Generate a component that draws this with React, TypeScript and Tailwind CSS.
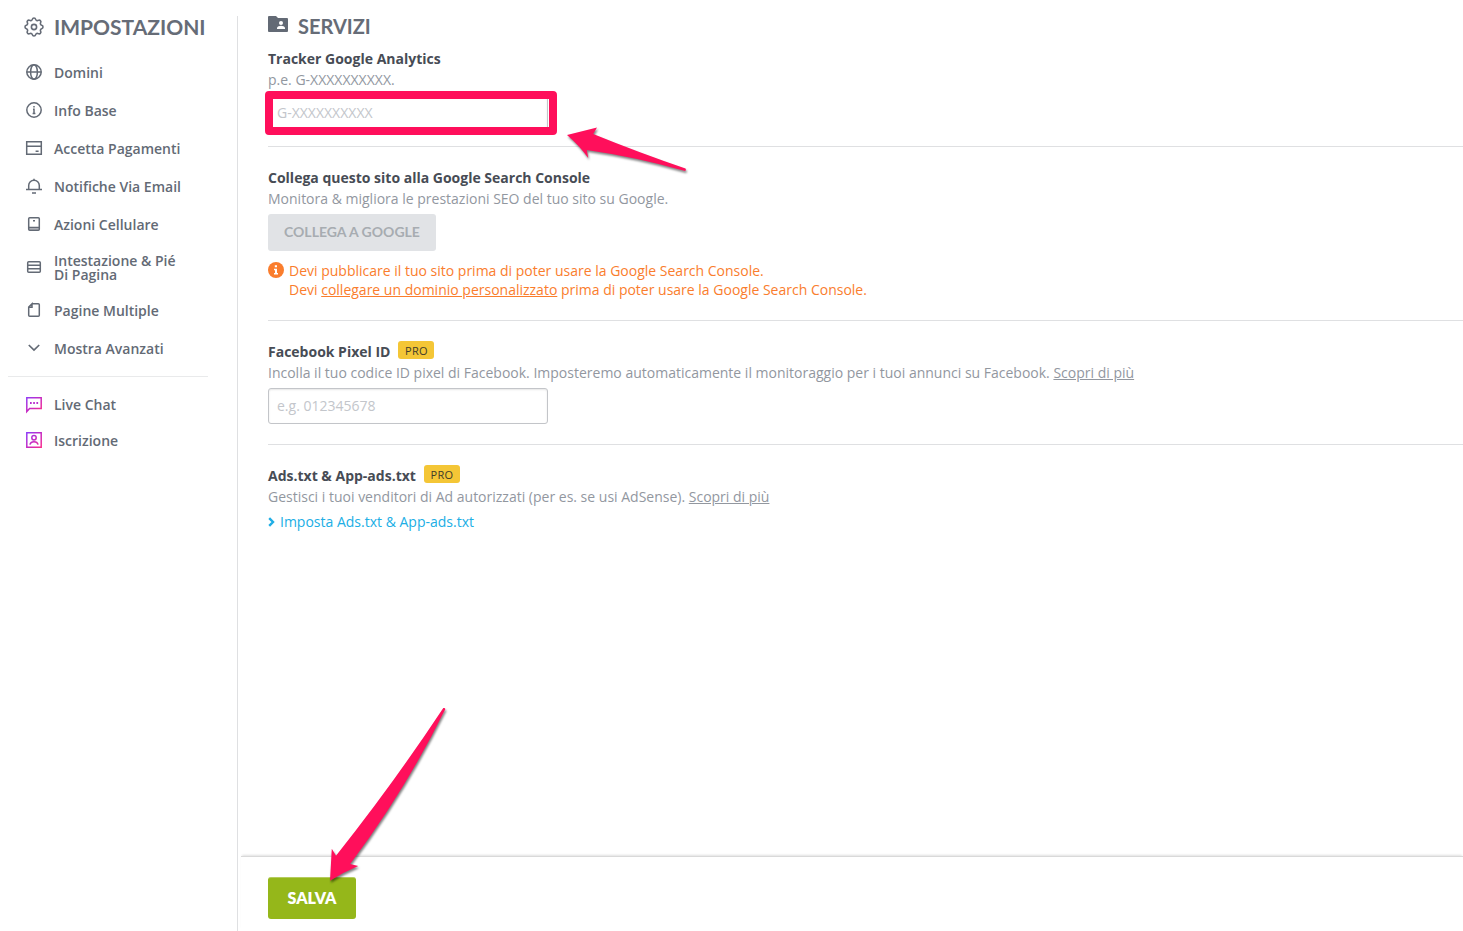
import React from 'react'

const FONT = "font-['Open_Sans','Noto_Sans',sans-serif]"
const HEADING = "font-['Lato','Open_Sans',sans-serif]"

interface IconProps {
  children: React.ReactNode
  stroke?: string
}

const Icon = ({ children, stroke = 'currentColor' }: IconProps) => (
  <svg viewBox="0 0 16 16" className="w-4 h-4 shrink-0 overflow-visible" fill="none" stroke={stroke} strokeWidth="1.5" aria-hidden="true">
    {children}
  </svg>
)

const GearIcon = () => (
  <svg viewBox="0 0 24 24" className="w-6 h-6 -mx-1 shrink-0" fill="none" stroke="currentColor" strokeWidth="1.6" strokeLinejoin="round" aria-hidden="true">
    <path d="M10.325 4.317c.426-1.756 2.924-1.756 3.35 0a1.724 1.724 0 002.573 1.066c1.543-.94 3.31.826 2.37 2.37a1.724 1.724 0 001.065 2.572c1.756.426 1.756 2.924 0 3.35a1.724 1.724 0 00-1.066 2.573c.94 1.543-.826 3.31-2.37 2.37a1.724 1.724 0 00-2.572 1.065c-.426 1.756-2.924 1.756-3.35 0a1.724 1.724 0 00-2.573-1.066c-1.543.94-3.31-.826-2.37-2.37a1.724 1.724 0 00-1.065-2.572c-1.756-.426-1.756-2.924 0-3.35a1.724 1.724 0 001.066-2.573c-.94-1.543.826-3.31 2.37-2.37.996.608 2.296.07 2.572-1.065z" />
    <circle cx="12" cy="12" r="2.6" />
  </svg>
)

const menu = [
  {
    label: 'Domini',
    icon: (
      <Icon>
        <circle cx="8" cy="8" r="7.2" />
        <ellipse cx="8" cy="8" rx="3.4" ry="7.2" />
        <path d="M.7 8h14.6" />
      </Icon>
    ),
  },
  {
    label: 'Info Base',
    icon: (
      <Icon>
        <circle cx="8" cy="8" r="7.2" />
        <path d="M8 4v1.6M7 7.2h1v4M6.6 11.4h2.8" />
      </Icon>
    ),
  },
  {
    label: 'Accetta Pagamenti',
    icon: (
      <Icon>
        <path d="M.7 1.7h14.6v12.6H.7zM.7 6.3h14.6M9.6 11.2h3" />
      </Icon>
    ),
  },
  {
    label: 'Notifiche Via Email',
    icon: (
      <Icon>
        <path d="M0 11.400h16M2.700 11.200V7.500a5.300 5.300 0 0 1 10.600 0v3.700M8 .8v1.600M6 14.900h4" />
      </Icon>
    ),
  },
  {
    label: 'Azioni Cellulare',
    icon: (
      <Icon>
        <rect x="2.7" y="1.7" width="10.6" height="12.6" rx="1" />
        <path d="M2.700 11.600h10.600M7 4.700h2" />
        <path d="M3 13h10" strokeOpacity=".5" />
      </Icon>
    ),
  },
  {
    label: 'Intestazione & Pié Di Pagina',
    icon: (
      <Icon>
        <rect x="1.7" y="2.7" width="12.6" height="10.6" rx="1" />
        <path d="M1.7 6.3h12.6M1.7 9.7h12.6" />
      </Icon>
    ),
  },
  {
    label: 'Pagine Multiple',
    icon: (
      <Icon>
        <path d="M6 1.700h6.300a1 1 0 0 1 1 1v10.600a1 1 0 0 1-1 1H3.700a1 1 0 0 1-1-1V5L6 1.700v3.600H2.700" />
      </Icon>
    ),
  },
  {
    label: 'Mostra Avanzati',
    icon: (
      <Icon>
        <path d="M2.800 5L8 10l5.200-5" strokeWidth="1.7" />
      </Icon>
    ),
  },
]

const help = [
  {
    label: 'Live Chat',
    icon: (
      <Icon stroke="url(#accent)">
        <path d="M.8 15.500V1.800h14.400v10.600H3.600z" />
        <path d="M4 7h1.700M7.200 7h1.700M10.400 7h1.700" strokeWidth="1.9" stroke="#b92fd0" />
      </Icon>
    ),
  },
  {
    label: 'Iscrizione',
    icon: (
      <Icon stroke="url(#accent)">
        <path d="M.8.8h14.4v14.4H.8z" />
        <circle cx="8" cy="5.8" r="2.2" />
        <path d="M3.900 12.600c.6-2.200 2.100-2.900 4.100-2.900s3.500.7 4.100 2.900" />
      </Icon>
    ),
  },
]

const ProBadge = () => (
  <span className="ml-2 inline-flex h-[18px] w-9 items-center justify-center rounded-[3px] bg-[#f4c636] text-[11px] font-medium tracking-wide text-[#3f3b2a]">PRO</span>
)

const Title = ({ children }: { children: React.ReactNode }) => (
  <h2 className="flex h-[21px] items-start whitespace-nowrap font-bold leading-[21px] text-[#474c55]">{children}</h2>
)

const inputClass =
  'block h-9 w-[280px] rounded-[3px] border border-[#c3c5c9] bg-white px-2 pb-[2px] text-sm text-[#5f6672] shadow-[inset_0_1px_2px_rgba(0,0,0,0.1)] outline-none placeholder:text-[#c3c6cb]'

const Sidebar = () => (
  <aside className="mt-4 w-[238px] shrink-0 border-r border-[#dfe0e2] pl-2 text-[#636a75]">
    <h1 className={`flex h-[22px] items-center gap-3 pl-[18px] text-[21px] font-bold text-[#666c77] ${HEADING}`}>
      <GearIcon />
      IMPOSTAZIONI
    </h1>
    <nav className="mt-[15px] w-[200px] font-semibold leading-[14px]">
      {menu.map(item => (
        <a key={item.label} href="#" className="flex min-h-[38px] items-center gap-3 py-[9px] pl-[18px] pr-6">
          {item.icon}
          <span className="pt-[2px]">{item.label}</span>
        </a>
      ))}
      <hr className="my-[9px] border-[#e9eaeb]" />
      {help.map(item => (
        <a key={item.label} href="#" className="flex h-9 items-center gap-3 pl-[18px]">
          {item.icon}
          <span className="pt-[2px]">{item.label}</span>
        </a>
      ))}
    </nav>
  </aside>
)

const App = () => (
  <div className={`flex min-h-screen bg-white text-sm text-[#92979f] ${FONT}`}>
    <svg className="absolute h-0 w-0" aria-hidden="true">
      <defs>
        <linearGradient id="accent" gradientUnits="userSpaceOnUse" x1="0" y1="0" x2="16" y2="16">
          <stop offset="0" stopColor="#8a3ffc" />
          <stop offset="0.5" stopColor="#c42bc4" />
          <stop offset="1" stopColor="#ff2e88" />
        </linearGradient>
      </defs>
    </svg>

    <Sidebar />

    <main className="flex min-w-0 flex-1 flex-col pt-4">
      <div className="flex-1 pl-[30px]">
        <h1 className={`flex h-5 items-center gap-[10px] text-xl font-bold text-[#666c77] ${HEADING}`}>
          <svg viewBox="0 0 20 16" className="mb-1 h-4 w-5" aria-hidden="true">
            <path fill="#636a75" d="M1 0h7l2 2h9a1 1 0 0 1 1 1v12a1 1 0 0 1-1 1H1a1 1 0 0 1-1-1V1a1 1 0 0 1 1-1z" />
            <circle cx="13" cy="7" r="2" fill="#fff" />
            <path fill="#fff" d="M9 13v-1c0-1.400 2.600-2.200 4-2.200s4 .8 4 2.200v1z" />
          </svg>
          SERVIZI
        </h1>

        <section className="mt-3 border-b border-[#dfe0e2] pb-[15px]">
          <Title>
            <label htmlFor="ga">Tracker Google Analytics</label>
          </Title>
          <p className="leading-[21px]">p.e. G-XXXXXXXXXX.</p>
          <div className="relative mt-[5px] w-[280px]">
            <input id="ga" type="text" placeholder="G-XXXXXXXXXX" className={inputClass} />
            <div className="pointer-events-none absolute -left-[3px] -right-[9px] -top-1 -bottom-1 rounded-[4px] border-8 border-[#ff0f5b]" />
            <svg viewBox="0 0 124 50" className="pointer-events-none absolute left-[298px] top-[31px] h-[50px] w-[124px] overflow-visible drop-shadow-[1px_2px_1px_rgba(0,0,0,0.5)]" aria-hidden="true">
              <path fill="#ff0f5b" d="M1 9L31 1.600 27.200 8Q74 27 119.500 42.500q1 2-.5 2.500Q70 31 20.800 24l1.400 8Q13 19 1 9z" />
            </svg>
          </div>
        </section>

        <section className="border-b border-[#dfe0e2] py-5">
          <Title>Collega questo sito alla Google Search Console</Title>
          <p className="leading-[21px]">Monitora &amp; migliora le prestazioni SEO del tuo sito su Google.</p>
          <button type="button" disabled className={`mt-[5px] block h-[37px] rounded-[3px] bg-[#e1e3e6] px-4 pb-[2px] text-sm font-bold text-[#a7acb1] ${HEADING}`}>
            COLLEGA A GOOGLE
          </button>
          <div className="mt-[10px] flex gap-[5px] pb-px leading-[19px] text-[#fa7d2d]">
            <svg viewBox="0 0 16 16" className="mt-px h-4 w-4 shrink-0" aria-hidden="true">
              <circle cx="8" cy="8" r="8" fill="currentColor" />
              <path fill="#fff" d="M6.800 3.200h2.200v2.100H6.800zM6 6.700h3v4.200h1v1.500H6v-1.500h1V8.200H6z" />
            </svg>
            <p>
              Devi pubblicare il tuo sito prima di poter usare la Google Search Console.
              <br />
              Devi <a href="#" className="underline">collegare un dominio personalizzato</a> prima di poter usare la Google Search Console.
            </p>
          </div>
        </section>

        <section className="border-b border-[#dfe0e2] py-5">
          <Title>
            <label htmlFor="pixel">Facebook Pixel ID</label>
            <ProBadge />
          </Title>
          <p className="leading-[21px]">
            Incolla il tuo codice ID pixel di Facebook. Imposteremo automaticamente il monitoraggio per i tuoi annunci su Facebook.{' '}
            <a href="#" className="underline">Scopri di più</a>
          </p>
          <input id="pixel" type="text" placeholder="e.g. 012345678" className={`mt-[5px] ${inputClass}`} />
        </section>

        <section className="py-5">
          <Title>
            Ads.txt &amp; App-ads.txt
            <ProBadge />
          </Title>
          <p className="leading-[21px]">
            Gestisci i tuoi venditori di Ad autorizzati (per es. se usi AdSense).{' '}
            <a href="#" className="underline">Scopri di più</a>
          </p>
          <a href="#" className="mt-[5px] inline-flex items-center gap-[5px] text-[#20aee5]">
            <svg viewBox="0 0 7 10" className="h-[10px] w-[7px]" fill="none" stroke="currentColor" strokeWidth="2.4" aria-hidden="true">
              <path d="M1.200 1.200L5 5 1.200 8.800" />
            </svg>
            Imposta Ads.txt &amp; App-ads.txt
          </a>
        </section>
      </div>

      <footer className="ml-[3px] border-t border-[#d9d9d9] pb-3 pl-[27px] pt-5 shadow-[0_-2px_2px_-1px_rgba(0,0,0,0.12)]">
        <div className="relative w-[88px]">
          <button type="button" className={`block h-[42px] w-full rounded-[3px] bg-[#95b71a] text-base font-extrabold text-white shadow-[inset_0_2px_0_-1px_rgba(255,255,255,0.3)] ${HEADING}`}>
            SALVA
          </button>
          <svg viewBox="0 0 120 180" className="pointer-events-none absolute bottom-[32px] left-[60px] h-[180px] w-[120px] overflow-visible drop-shadow-[1px_2px_1px_rgba(0,0,0,0.5)]" aria-hidden="true">
            <path fill="#ff0f5b" d="M2 173.700L3.800 141.700l4.200 7Q65 77 115.300 1q2-.5 2 1.300Q77 84 22.200 157l8 2Q16 165 2 173.700z" />
          </svg>
        </div>
      </footer>
    </main>
  </div>
)

export default App
